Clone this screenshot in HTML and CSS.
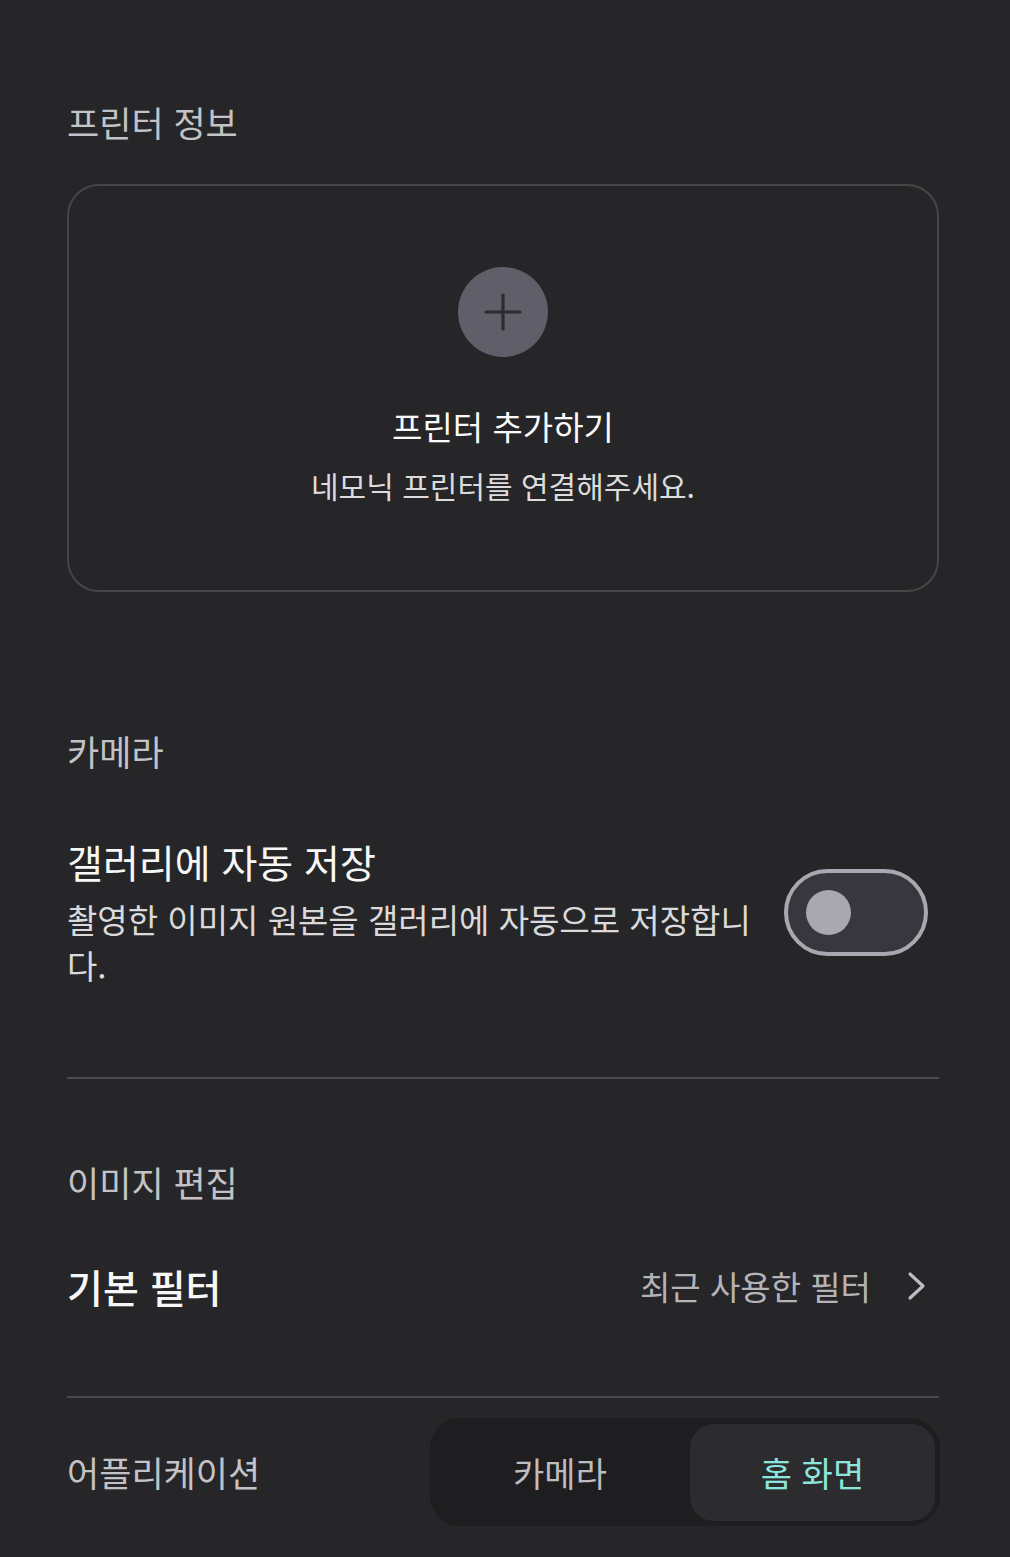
FILE: index.html
```html
<!DOCTYPE html>
<html lang="ko">
<head>
<meta charset="utf-8">
<link rel="stylesheet" href="styles.css">
</head>
<body>
<main class="page">
  <h2 class="section-title">프린터 정보</h2>
  <div class="printer-card">
    <div class="add-circle">
      <svg width="40" height="40" viewBox="0 0 40 40"><path d="M20 3 V37 M3 20 H37" stroke="#2b2b30" stroke-width="3.2" stroke-linecap="round"/></svg>
    </div>
    <div class="card-title">프린터 추가하기</div>
    <div class="card-sub">네모닉 프린터를 연결해주세요.</div>
  </div>

  <h2 class="section-title camera-title">카메라</h2>
  <div class="toggle-row">
    <div class="toggle-text">
      <div class="item-title">갤러리에 자동 저장</div>
      <div class="item-desc">촬영한 이미지 원본을 갤러리에 자동으로 저장합니다.</div>
    </div>
    <div class="toggle"><div class="knob"></div></div>
  </div>
  <hr class="divider divider-1">

  <h2 class="section-title edit-title">이미지 편집</h2>
  <div class="filter-row">
    <div class="item-title bold">기본 필터</div>
    <div class="filter-value">
      <span>최근 사용한 필터</span>
      <svg width="20" height="30" viewBox="0 0 20 30"><path d="M3 3 L16 15 L3 27" fill="none" stroke="#bdbdc0" stroke-width="3.2" stroke-linecap="round" stroke-linejoin="round"/></svg>
    </div>
  </div>
  <hr class="divider divider-2">

  <div class="app-row">
    <div class="app-label">어플리케이션</div>
    <div class="segment">
      <div class="seg-item">카메라</div>
      <div class="seg-item active">홈 화면</div>
    </div>
  </div>
</main>
</body>
</html>
```
FILE: styles.css
```css
html, body {
  margin: 0;
  padding: 0;
  background: #262628;
}
body {
  font-family: "Noto Sans CJK KR", "Noto Sans", sans-serif;
  color: #f2f2f4;
}
.page {
  width: 872px;
  margin-left: 67px;
  padding-top: 98px;
  padding-bottom: 30px;
}
.section-title {
  margin: 0;
  font-size: 35px;
  line-height: 48px;
  font-weight: 400;
  color: #c3c3c7;
}
.printer-card {
  margin-top: 38px;
  height: 408px;
  box-sizing: border-box;
  border: 2px solid #464649;
  border-radius: 32px;
  padding-top: 81px;
  display: flex;
  flex-direction: column;
  align-items: center;
}
.add-circle {
  width: 90px;
  height: 90px;
  border-radius: 50%;
  background: #5f5e69;
  display: flex;
  align-items: center;
  justify-content: center;
}
.card-title {
  margin-top: 47px;
  font-size: 33px;
  line-height: 44px;
  color: #fafafa;
}
.card-sub {
  margin-top: 17px;
  font-size: 30px;
  line-height: 40px;
  color: #dcdcde;
}
.camera-title {
  margin-top: 135px;
}
.toggle-row {
  margin-top: 61px;
  display: flex;
  align-items: center;
  justify-content: space-between;
}
.toggle-text {
  width: 700px;
}
.item-title {
  font-size: 39px;
  line-height: 50px;
  color: #f7f7f8;
}
.item-title.bold {
  font-weight: 500;
}
.item-desc {
  margin-top: 10px;
  font-size: 33px;
  line-height: 46px;
  color: #dadadc;
}
.toggle {
  width: 144px;
  height: 87px;
  box-sizing: border-box;
  border: 4px solid #a9a8b0;
  border-radius: 44px;
  background: #38373d;
  margin-right: 11px;
  display: flex;
  align-items: center;
  padding-left: 18px;
}
.knob {
  width: 45px;
  height: 45px;
  border-radius: 50%;
  background: #a9a8b0;
}
.divider {
  border: 0;
  height: 2px;
  background: #4b4b4e;
  margin: 0;
}
.divider-1 {
  margin-top: 89px;
}
.edit-title {
  margin-top: 79px;
}
.filter-row {
  margin-top: 55px;
  display: flex;
  align-items: center;
  justify-content: space-between;
}
.filter-value {
  display: flex;
  align-items: center;
  gap: 36px;
  padding-right: 12px;
  font-size: 33px;
  color: #b4b4b8;
}
.filter-value svg {
  display: block;
}
.divider-2 {
  margin-top: 85px;
}
.app-row {
  margin-top: 20px;
  display: flex;
  align-items: center;
  justify-content: space-between;
}
.app-label {
  font-size: 35px;
  line-height: 48px;
  color: #c3c3c7;
}
.segment {
  width: 510px;
  height: 108px;
  box-sizing: border-box;
  background: #1e1e20;
  border-radius: 30px;
  padding: 6px 5px 5px 0;
  display: grid;
  grid-template-columns: 260px 1fr;
  margin-right: -1px;
}
.seg-item {
  display: flex;
  align-items: center;
  justify-content: center;
  font-size: 34px;
  color: #bdbdc0;
}
.seg-item.active {
  background: #2c2c2f;
  border-radius: 24px;
  color: #8ce6de;
}
```
